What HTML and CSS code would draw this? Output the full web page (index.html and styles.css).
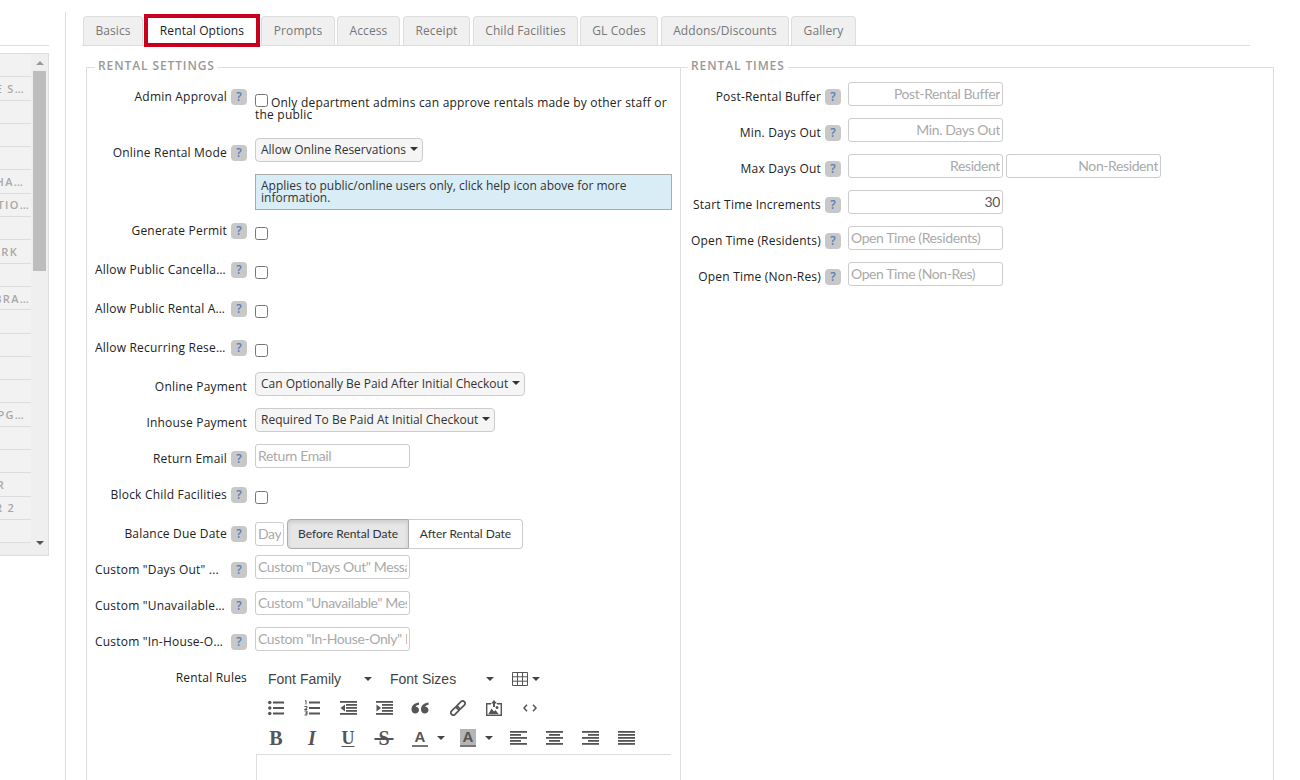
FILE: index.html
```html
<!DOCTYPE html>
<html lang="en">
<head>
<meta charset="utf-8">
<title>Rental Options</title>
<link rel="stylesheet" href="styles.css">
</head>
<body>
<div class="page">
  <aside class="side">
    <div class="side-rule"></div>
    <div class="side-panel">
      <div class="side-list">
        <div class="side-row"></div>
        <div class="side-row end-6">E S…</div>
        <div class="side-row"></div>
        <div class="side-row"></div>
        <div class="side-row"></div>
        <div class="side-row end-7">HA…</div>
        <div class="side-row end-1">TIO…</div>
        <div class="side-row"></div>
        <div class="side-row end-13">ARK</div>
        <div class="side-row"></div>
        <div class="side-row end-1">BRA…</div>
        <div class="side-row"></div>
        <div class="side-row"></div>
        <div class="side-row"></div>
        <div class="side-row"></div>
        <div class="side-row end-6">PG…</div>
        <div class="side-row"></div>
        <div class="side-row"></div>
        <div class="side-row end-26">R</div>
        <div class="side-row end-16">R 2</div>
        <div class="side-row"></div>
      </div>
      <div class="scroll">
        <span class="scroll-up"></span>
        <div class="scroll-thumb"></div>
        <span class="scroll-down"></span>
      </div>
    </div>
  </aside>
  <main class="main">
    <nav class="tabs">
      <a class="tab t-basics">Basics</a>
      <a class="tab tab-active">Rental Options</a>
      <a class="tab t-prompts">Prompts</a>
      <a class="tab t-access">Access</a>
      <a class="tab t-receipt">Receipt</a>
      <a class="tab t-child">Child Facilities</a>
      <a class="tab t-gl">GL Codes</a>
      <a class="tab t-addons">Addons/Discounts</a>
      <a class="tab t-gallery">Gallery</a>
    </nav>
    <div class="columns">
      <fieldset class="group group-left">
        <legend>RENTAL SETTINGS</legend>
        <div class="row row-admin">
          <div class="label">Admin Approval</div><span class="help">?</span>
          <div class="control admin-text"><input type="checkbox" class="check check-inline"><span>Only department admins can approve rentals made by other staff or the public</span></div>
        </div>
        <div class="row">
          <div class="label">Online Rental Mode</div><span class="help">?</span>
          <div class="control"><button class="select">Allow Online Reservations<i class="caret"></i></button></div>
        </div>
        <div class="row row-note">
          <div class="note">Applies to public/online users only, click help icon above for more information.</div>
        </div>
        <div class="row row-check">
          <div class="label">Generate Permit</div><span class="help">?</span>
          <div class="control"><input type="checkbox" class="check"></div>
        </div>
        <div class="row row-check">
          <div class="label">Allow Public Cancellation</div><span class="help">?</span>
          <div class="control"><input type="checkbox" class="check"></div>
        </div>
        <div class="row row-check">
          <div class="label">Allow Public Rental Agreement</div><span class="help">?</span>
          <div class="control"><input type="checkbox" class="check"></div>
        </div>
        <div class="row row-check">
          <div class="label">Allow Recurring Reservations</div><span class="help">?</span>
          <div class="control"><input type="checkbox" class="check"></div>
        </div>
        <div class="row">
          <div class="label label-wide">Online Payment</div>
          <div class="control"><button class="select">Can Optionally Be Paid After Initial Checkout<i class="caret"></i></button></div>
        </div>
        <div class="row">
          <div class="label label-wide">Inhouse Payment</div>
          <div class="control"><button class="select">Required To Be Paid At Initial Checkout<i class="caret"></i></button></div>
        </div>
        <div class="row">
          <div class="label">Return Email</div><span class="help">?</span>
          <div class="control"><input class="input input-m" placeholder="Return Email"></div>
        </div>
        <div class="row row-check">
          <div class="label">Block Child Facilities</div><span class="help">?</span>
          <div class="control"><input type="checkbox" class="check"></div>
        </div>
        <div class="row">
          <div class="label">Balance Due Date</div><span class="help">?</span>
          <div class="control control-date">
            <input class="input input-day" placeholder="Days">
            <div class="btn-group"><button class="seg seg-on">Before Rental Date</button><button class="seg">After Rental Date</button></div>
          </div>
        </div>
        <div class="row">
          <div class="label label-left">Custom "Days Out" ...</div><span class="help">?</span>
          <div class="control"><input class="input input-m" placeholder="Custom &quot;Days Out&quot; Message"></div>
        </div>
        <div class="row">
          <div class="label">Custom "Unavailable" Message</div><span class="help">?</span>
          <div class="control"><input class="input input-m" placeholder="Custom &quot;Unavailable&quot; Message"></div>
        </div>
        <div class="row">
          <div class="label">Custom "In-House-Only" Message</div><span class="help">?</span>
          <div class="control"><input class="input input-m" placeholder="Custom &quot;In-House-Only&quot; Message"></div>
        </div>
        <div class="row row-editor">
          <div class="label label-wide">Rental Rules</div>
          <div class="editor">
            <div class="tb-row tb-fonts">
              <span class="tb-drop tb-family">Font Family<i class="caret caret-dark"></i></span>
              <span class="tb-drop tb-sizes">Font Sizes<i class="caret caret-dark"></i></span>
              <span class="tb-table">
                <svg class="ico" width="16" height="14" viewBox="0 0 16 14"><path fill="none" stroke="#555" d="M.5.5h15v13H.5zM.5 4.800h15M.5 9.200h15M5.500.5v13M10.500.5v13"/></svg>
                <i class="caret caret-dark"></i>
              </span>
            </div>
            <div class="tb-row tb-icons">
              <span class="tb"><svg class="ico" width="16" height="16" viewBox="0 0 16 16"><g fill="#555"><circle cx="1.800" cy="2.500" r="1.700"/><circle cx="1.800" cy="8" r="1.700"/><circle cx="1.800" cy="13.500" r="1.700"/><rect x="5" y="1.500" width="11" height="2"/><rect x="5" y="7" width="11" height="2"/><rect x="5" y="12.500" width="11" height="2"/></g></svg></span>
              <span class="tb"><svg class="ico" width="16" height="16" viewBox="0 0 16 16"><g fill="#555"><rect x="5" y="1.500" width="11" height="2"/><rect x="5" y="7" width="11" height="2"/><rect x="5" y="12.500" width="11" height="2"/></g><path fill="none" stroke="#555" d="M1 1l1-.5v4M.5 6.500h2.500v1.500l-2.500 1.500h2.800M.5 11h2.500v2h-1.500h1.500v2h-2.500"/></svg></span>
              <span class="tb"><svg class="ico" width="17" height="14" viewBox="0 0 17 14"><g fill="#555"><rect width="17" height="1.800"/><rect x="6" y="3" width="11" height="1.800"/><rect x="6" y="6" width="11" height="1.800"/><rect x="6" y="9" width="11" height="1.800"/><rect y="12" width="17" height="1.800"/><path d="M5 3.500v7L.5 7z"/></g></svg></span>
              <span class="tb"><svg class="ico" width="17" height="14" viewBox="0 0 17 14"><g fill="#555"><rect width="17" height="1.800"/><rect x="6" y="3" width="11" height="1.800"/><rect x="6" y="6" width="11" height="1.800"/><rect x="6" y="9" width="11" height="1.800"/><rect y="12" width="17" height="1.800"/><path d="M.5 3.500v7L5 7z"/></g></svg></span>
              <span class="tb"><svg class="ico" width="18" height="12" viewBox="0 0 18 12"><path fill="#555" d="M8 .5C4 1 .5 3 .5 7.500c0 2.500 1.800 4 3.800 4s3.700-1.500 3.700-3.500S6.500 4.600 4.600 4.800C5 3.500 6.400 2.900 8 2.700zM17.500.5c-4 .5-7.500 2.500-7.500 7 0 2.500 1.800 4 3.800 4s3.700-1.500 3.700-3.500-1.500-3.400-3.400-3.200c.4-1.300 1.800-1.900 3.400-2.100z"/></svg></span>
              <span class="tb tb-link"><svg class="ico" width="16" height="16" viewBox="0 0 16 16"><g fill="none" stroke="#555" stroke-width="1.700"><rect x="-1" y="5.600" width="10" height="4.800" rx="2.400" transform="rotate(-45 8 8)"/><rect x="7" y="5.600" width="10" height="4.800" rx="2.400" transform="rotate(-45 8 8)"/></g></svg></span>
              <span class="tb"><svg class="ico" width="16" height="16" viewBox="0 0 16 16"><path fill="none" stroke="#555" stroke-width="1.400" d="M5 3.700H.7v11.600h14.600V3.700H11"/><path fill="#555" d="M8 0l3 3.500H9V7H7V3.500H5zM2.500 14l3-5.500 2.500 3 1.500-1.500 3 4zM11 6a1.500 1.500 0 1 1 0 3 1.500 1.500 0 0 1 0-3z"/></svg></span>
              <span class="tb"><svg class="ico" width="14" height="8" viewBox="0 0 14 8"><path fill="none" stroke="#555" stroke-width="1.500" d="M4 .8L1 4l3 3.200M10 .8L13 4l-3 3.200"/></svg></span>
            </div>
            <div class="tb-row tb-format">
              <span class="tb tb-b">B</span>
              <span class="tb tb-i">I</span>
              <span class="tb tb-u">U</span>
              <span class="tb tb-s">&thinsp;S&thinsp;</span>
              <span class="tb tb-color"><span class="tb-a">A</span><i class="caret caret-dark"></i></span>
              <span class="tb tb-color tb-color-bg"><span class="tb-a tb-a-bg">A</span><i class="caret caret-dark"></i></span>
              <span class="tb"><svg class="ico" width="17" height="14" viewBox="0 0 17 14"><g fill="#555"><rect width="17" height="1.800"/><rect y="3" width="11" height="1.800"/><rect y="6" width="17" height="1.800"/><rect y="9" width="11" height="1.800"/><rect y="12" width="17" height="1.800"/></g></svg></span>
              <span class="tb"><svg class="ico" width="17" height="14" viewBox="0 0 17 14"><g fill="#555"><rect width="17" height="1.800"/><rect x="3" y="3" width="11" height="1.800"/><rect y="6" width="17" height="1.800"/><rect x="3" y="9" width="11" height="1.800"/><rect y="12" width="17" height="1.800"/></g></svg></span>
              <span class="tb"><svg class="ico" width="17" height="14" viewBox="0 0 17 14"><g fill="#555"><rect width="17" height="1.800"/><rect x="6" y="3" width="11" height="1.800"/><rect y="6" width="17" height="1.800"/><rect x="6" y="9" width="11" height="1.800"/><rect y="12" width="17" height="1.800"/></g></svg></span>
              <span class="tb"><svg class="ico" width="17" height="14" viewBox="0 0 17 14"><g fill="#555"><rect width="17" height="1.800"/><rect y="3" width="17" height="1.800"/><rect y="6" width="17" height="1.800"/><rect y="9" width="17" height="1.800"/><rect y="12" width="17" height="1.800"/></g></svg></span>
            </div>
            <div class="edit-area"></div>
          </div>
        </div>
      </fieldset>
      <fieldset class="group group-right">
        <legend>RENTAL TIMES</legend>
        <div class="row">
          <div class="label label-r">Post-Rental Buffer</div><span class="help">?</span>
          <div class="control control-r"><input class="input input-l right" placeholder="Post-Rental Buffer"></div>
        </div>
        <div class="row">
          <div class="label label-r">Min. Days Out</div><span class="help">?</span>
          <div class="control control-r"><input class="input input-l right" placeholder="Min. Days Out"></div>
        </div>
        <div class="row">
          <div class="label label-r">Max Days Out</div><span class="help">?</span>
          <div class="control control-r control-pair"><input class="input input-l right" placeholder="Resident"><input class="input input-l right" placeholder="Non-Resident"></div>
        </div>
        <div class="row">
          <div class="label label-r">Start Time Increments</div><span class="help">?</span>
          <div class="control control-r"><input class="input input-l right" value="30"></div>
        </div>
        <div class="row">
          <div class="label label-r">Open Time (Residents)</div><span class="help">?</span>
          <div class="control control-r"><input class="input input-l" placeholder="Open Time (Residents)"></div>
        </div>
        <div class="row">
          <div class="label label-r">Open Time (Non-Res)</div><span class="help">?</span>
          <div class="control control-r"><input class="input input-l" placeholder="Open Time (Non-Res)"></div>
        </div>
      </fieldset>
    </div>
  </main>
</div>
</body>
</html>
```

FILE: styles.css
```css
* { box-sizing: border-box; }
html, body { margin: 0; height: 100%; overflow: hidden; background: #fff; }
body { font-family: "Open Sans", sans-serif; font-size: 12px; color: #222; }

.page { display: flex; width: 1300px; height: 780px; overflow: hidden; }

/* sidebar */
.side { width: 66px; flex: none; margin-top: 12px; padding-top: 33px; border-right: 1px solid #ddd; }
.side-rule { width: 49px; height: 1px; background: #ddd; margin-bottom: 7px; }
.side-panel { width: 49px; height: 503px; background: #efefef; border: 1px solid #ddd; border-left: 0; display: flex; }
.side-list { width: 31px; flex: none; }
.side-row { height: 23.3px; border-bottom: 1px solid #ddd; display: flex; justify-content: flex-end; align-items: center; overflow: hidden; white-space: nowrap; font-size: 11px; font-weight: 600; letter-spacing: 1.3px; color: #a8a8a8; background: #f2f2f2; }
.end-1 { padding-right: 1px; }
.end-6 { padding-right: 6px; }
.end-7 { padding-right: 7px; }
.end-13 { padding-right: 13px; }
.end-16 { padding-right: 16px; }
.end-26 { padding-right: 26px; }
.scroll { width: 17px; flex: none; display: flex; flex-direction: column; align-items: center; }
.scroll-thumb { width: 13px; margin-top: 6px; height: 200px; background: #bdbdbd; }
.scroll-up, .scroll-down { width: 0; height: 0; border-left: 4px solid transparent; border-right: 4px solid transparent; }
.scroll-up { margin-top: 7px; border-bottom: 4px solid #999; }
.scroll-down { margin-top: 270px; border-top: 4px solid #555; }

/* tabs */
.main { flex: 1; min-width: 0; padding-left: 16px; }
.tabs { display: flex; align-items: flex-end; height: 46px; width: 1168px; padding: 16px 0 0 1px; border-bottom: 1px solid #ddd; gap: 2px; }
.tab { height: 29px; display: flex; align-items: center; justify-content: center; padding-bottom: 1px; background: #f0f0f0; border: 1px solid #ddd; border-bottom: 0; border-radius: 4px 4px 0 0; color: #777; font-size: 12px; letter-spacing: .1px; }
.t-basics { width: 60px; }
.tab-active { width: 116px; height: 33px; margin: 0 0 -2px -1px; padding-bottom: 0; background: #fff; border: 4px solid #c8001e; border-radius: 0; color: #222; }
.t-prompts { width: 74px; margin-left: -1px; }
.t-access { width: 63px; }
.t-receipt { width: 67px; margin-left: 1px; }
.t-child { width: 105px; margin-left: 1px; }
.t-gl { width: 78px; }
.t-addons { width: 128px; margin-left: 1px; }
.t-gallery { width: 65px; }

/* fieldsets */
.columns { display: flex; margin-left: 4px; margin-top: 13px; }
.group { margin: 0; min-width: 0; border: 1px solid #ddd; border-bottom: 0; height: 760px; }
.group legend { font-size: 12px; font-weight: 600; letter-spacing: .9px; color: #999; padding: 0 3px 3px; line-height: 14px; }
.group-left { width: 594px; padding: 6px 0 0 8px; border-right: 0; }
.group-left legend { margin-left: 0; }
.group-right { width: 594px; padding: 6px 0 0 9px; }
.group-right legend { margin-left: -2px; }

/* rows */
.row { display: flex; align-items: flex-start; height: 36px; }
.row-admin { height: 56px; }
.row-note { height: 42px; padding-left: 160px; }
.row-check { height: 39px; }
.row-editor { height: auto; }
.label { width: 132px; flex: none; line-height: 30px; text-align: right; letter-spacing: .2px; overflow: hidden; white-space: nowrap; text-overflow: ellipsis; color: #222; }
.label-left { text-align: left; }
.label-wide { width: 152px; }
.label-r { width: 131px; }
.help { width: 16px; height: 16px; flex: none; margin: 7px 8px 0 4px; background: #c8c8c8; border-radius: 4px; color: #4f81bd; font-size: 12px; font-weight: 600; line-height: 16px; text-align: center; }
.label-wide + .control { margin-left: 8px; }
.control { flex: none; }
.control-r { margin-left: -1px; }
.control-pair { display: flex; gap: 3px; }
.control-date { display: flex; align-items: flex-start; gap: 3px; }

.check { width: 13px; height: 13px; margin: 11px 0 0; display: block; accent-color: #555; }
.check-inline { display: inline-block; vertical-align: 0; margin: 0 3px 0 0; }
.admin-text { width: 417px; padding-top: 12px; line-height: 12px; letter-spacing: .21px; }

.select { height: 24px; padding: 0 4px 2px 5px; background: #f5f5f5; border: 1px solid #ccc; border-radius: 4px; font: 12px "Open Sans", sans-serif; color: #333; white-space: nowrap; display: inline-flex; align-items: center; }
.caret { display: inline-block; width: 0; height: 0; border-left: 4px solid transparent; border-right: 4px solid transparent; border-top: 4px solid #333; margin-left: 4px; }
.caret-dark { border-top-color: #444; }

.note { width: 417px; height: 36px; padding: 5px 5px 0; background: #d9edf7; border: 1px solid #aaa; line-height: 12px; color: #333; }

.input { height: 24px; border: 1px solid #ccc; border-radius: 3px; padding: 0 2px 2px; font: 14px Lato, sans-serif; letter-spacing: -.4px; color: #555; background: #fff; display: block; outline: 0; }
.input::placeholder { color: #aaa; opacity: 1; }
.input-m { width: 155px; }
.input-l { width: 155px; }
.input-day { width: 29px; margin-top: 3px; }
.right { text-align: right; }

.btn-group { display: flex; height: 30px; }
.seg { height: 30px; width: 114px; background: #fff; border: 1px solid #ccc; border-left: 0; border-radius: 0 4px 4px 0; font: 12px Lato, sans-serif; color: #333; padding: 0 0 1px; }
.seg-on { width: 122px; background: #e6e6e6; border: 1px solid #adadad; border-radius: 4px 0 0 4px; box-shadow: inset 0 2px 4px rgba(0,0,0,.125); }

/* editor */
.editor { width: 415px; flex: none; margin-left: 9px; }
.tb-row { display: flex; align-items: center; margin-left: 2px; }
.tb-fonts { height: 29px; margin: 1px 0 0 12px; font: 14px "Liberation Sans", Arial, sans-serif; color: #444; }
.tb-drop { display: flex; align-items: center; justify-content: space-between; }
.tb-family { width: 104px; margin-right: 18px; }
.tb-sizes { width: 104px; margin-right: 18px; }
.tb-table { display: flex; align-items: center; }
.tb-table .caret { margin-left: 4px; }
.tb-icons { height: 30px; }
.tb-format { height: 30px; margin-bottom: 1px; }
.tb { width: 36px; height: 26px; flex: none; display: flex; align-items: center; justify-content: center; font-family: "Liberation Serif", serif; font-weight: 700; font-size: 20px; color: #555; }
.tb-link { margin-left: 2px; }
.tb-i { font-style: italic; }
.tb-u { text-decoration: underline; text-underline-offset: 2px; font-size: 18px; }
.tb-s { text-decoration: line-through; white-space: pre; }
.tb-color { justify-content: flex-start; padding-left: 10px; width: 48px; }
.tb-color-bg { width: 50px; }
.tb-a { width: 16px; height: 18px; flex: none; display: block; text-align: center; font: 700 15px/16px "Liberation Sans", sans-serif; border-bottom: 2px solid #777; }
.tb-a-bg { background: #b5b5b5; }
.tb-color .caret { margin-left: 9px; }
.ico { display: block; flex: none; }
.edit-area { height: 60px; border: 1px solid #ddd; border-width: 1px 0 0 1px; }
```
